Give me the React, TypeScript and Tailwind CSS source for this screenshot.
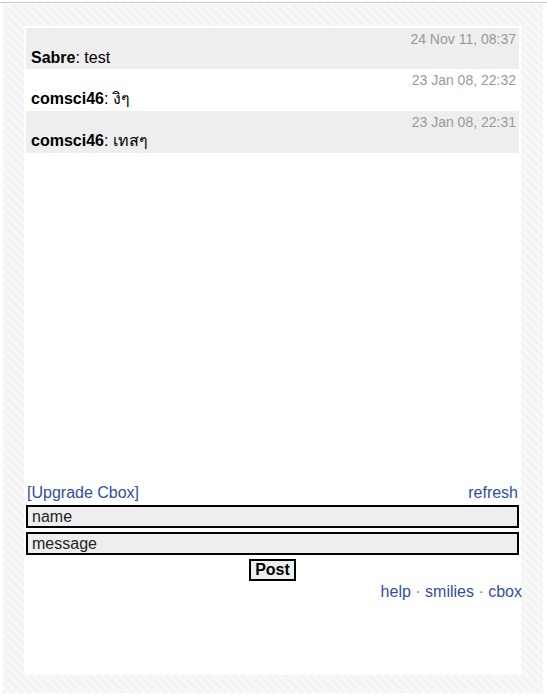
import React from 'react';

interface Message {
  id: number;
  name: string;
  text: string;
  time: string;
}

const messages: Message[] = [
  { id: 1, name: 'Sabre', text: 'test', time: '24 Nov 11, 08:37' },
  { id: 2, name: 'comsci46', text: 'งิๆ', time: '23 Jan 08, 22:32' },
  { id: 3, name: 'comsci46', text: 'เทสๆ', time: '23 Jan 08, 22:31' },
];

export default function App() {
  return (
    <div className="w-[547px] h-[697px] bg-white pt-[2px] font-['Liberation_Sans',Arial,sans-serif] text-[16px] text-black">
      <div className="border-t border-[#c8c8c8] pt-[1px] px-[3px]">
        {/* striped frame */}
        <div className="w-[540px] h-[689px] pl-[21px] pt-[22px] bg-[repeating-linear-gradient(45deg,#f3f3f3_0px,#f3f3f3_3px,#f8f8f8_3px,#f8f8f8_6px)]">
          <div className="w-[497px] h-[649px] bg-white flex flex-col p-[2px]">
            {/* message list */}
            <div className="flex-1">
              {messages.map((m, i) => (
                <div
                  key={m.id}
                  className={`${i === 0 ? 'h-[41px]' : 'h-[42px]'} pl-[5px] pr-[3px] pt-[3px] ${i % 2 === 0 ? 'bg-[#eeeeee]' : 'bg-white'}`}
                >
                  <div className="text-right text-[14px] leading-[17px] text-[#999999]">{m.time}</div>
                  <div className="leading-[19px]">
                    <b>{m.name}</b>: {m.text}
                  </div>
                </div>
              ))}
            </div>

            {/* form */}
            <div className="flex justify-between px-[1px] leading-[18px] text-[#2f4f9e]">
              <span>[Upgrade Cbox]</span>
              <span>refresh</span>
            </div>
            <div className="mt-[3px] h-[23px] border-2 border-black bg-[#eeeeee] px-[4px] leading-[19px] text-[#222]">name</div>
            <div className="mt-[4px] h-[23px] border-2 border-black bg-[#eeeeee] px-[4px] leading-[19px] text-[#222]">message</div>
            <div className="flex justify-center mt-[4px]">
              <button className="h-[22px] border-2 border-black bg-[#eeeeee] px-[4px] font-bold leading-[18px]">Post</button>
            </div>
            <div className="text-right -mr-[3px] mt-[2px] leading-[18px] text-[#2f4f9e] mb-[72px]">
              help <span className="text-[#888]">·</span> smilies <span className="text-[#888]">·</span> cbox
            </div>
          </div>
        </div>
      </div>
    </div>
  );
}
